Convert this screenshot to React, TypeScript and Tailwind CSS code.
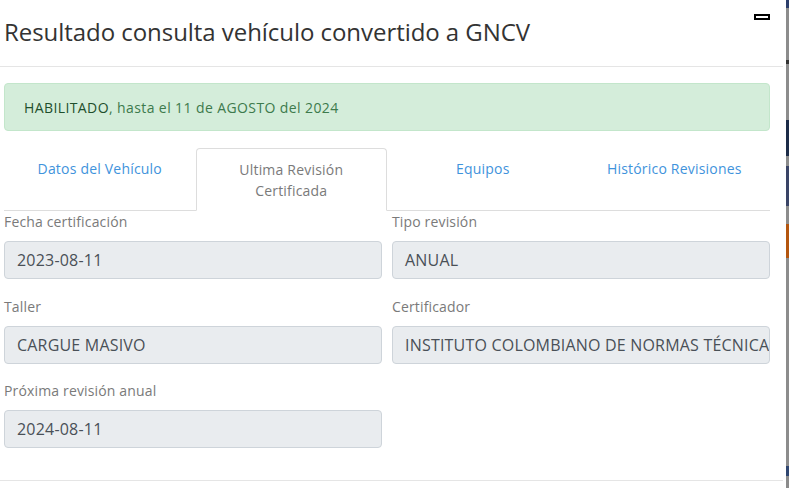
import React from "react";

const font = { fontFamily: '"Open Sans", "Noto Sans", sans-serif' };

function Field({ label, value }: { label: string; value: string }) {
  return (
    <div className="flex flex-col">
      <div className="text-[14px] leading-[21px] text-[#7a7a7a] mb-[9px] tracking-[0.15px]">{label}</div>
      <div className="h-[38px] bg-[#e9ecef] border border-[#ced4da] rounded-[4px] pl-[12px] pr-[9px] flex items-center overflow-hidden whitespace-nowrap text-[16px] text-[#495057] tracking-[0.2px]">
        {value}
      </div>
    </div>
  );
}

export default function App() {
  return (
    <div className="w-[789px] h-[488px] flex bg-white overflow-hidden" style={font}>
      <div className="relative w-[786px] h-full flex flex-col bg-white">
        {/* header */}
        <div className="relative h-[67px] w-[783px] border-b border-[#e5e5e5] pl-[4px] pt-[14px]">
          <h4 className="text-[24px] leading-[36px] text-[#333] font-normal tracking-[-0.05px]">
            Resultado consulta vehículo convertido a GNCV
          </h4>
          <div className="absolute left-[754px] top-[14px] w-[16px] h-[6px] border-2 border-black bg-white" />
        </div>

        {/* body */}
        <div className="pl-[4px] pt-[16px]">
          <div className="w-[766px] h-[48px] bg-[#d4edda] border border-[#c3e6cb] rounded-[4px] flex items-center pl-[19px] text-[14px] tracking-[0.4px]">
            <span className="text-[#1f4f2c]">HABILITADO</span>
            <span className="text-[#3d7a4c]">, hasta el 11 de AGOSTO del 2024</span>
          </div>

          <div className="mt-[17px] w-[766px] grid grid-cols-4 border-b border-[#dddddd] text-[14px] leading-[21px] tracking-[0.2px]">
            <div className="pt-[10px] pb-[9px] px-2 text-center text-[#3f93dc]">Datos del Vehículo</div>
            <div className="pt-[10px] pb-[9px] px-2 text-center text-[#7a7a7a] bg-white border border-[#dddddd] border-b-white rounded-t-[4px] -mb-px">
              Ultima Revisión
              <br />
              Certificada
            </div>
            <div className="pt-[10px] pb-[9px] px-2 text-center text-[#3f93dc]">Equipos</div>
            <div className="pt-[10px] pb-[9px] px-2 text-center text-[#3f93dc]">Histórico Revisiones</div>
          </div>

          <div className="w-[766px] grid grid-cols-2 gap-x-[10px] gap-y-[16.5px]">
            <Field label="Fecha certificación" value="2023-08-11" />
            <Field label="Tipo revisión" value="ANUAL" />
            <Field label="Taller" value="CARGUE MASIVO" />
            <Field label="Certificador" value="INSTITUTO COLOMBIANO DE NORMAS TÉCNICAS" />
            <Field label="Próxima revisión anual" value="2024-08-11" />
          </div>
        </div>

        <div className="mt-[32px] w-[783px] border-t border-[#e5e5e5]" />
      </div>

      {/* background page strip */}
      <div className="w-[3px] h-full flex flex-col bg-[#8c8c8c]">
        <div className="h-[8px] bg-[#2c3e6b]" />
        <div className="h-[52px]" />
        <div className="h-[4px] bg-[#333]" />
        <div className="h-[56px]" />
        <div className="h-[36px] bg-[#1d2c48]" />
        <div className="h-[10px]" />
        <div className="h-[40px] bg-[#3a4466]" />
        <div className="h-[18px]" />
        <div className="h-[34px] bg-[#b4560f]" />
        <div className="h-[208px]" />
        <div className="h-[10px] bg-[#2f4670]" />
      </div>
    </div>
  );
}
